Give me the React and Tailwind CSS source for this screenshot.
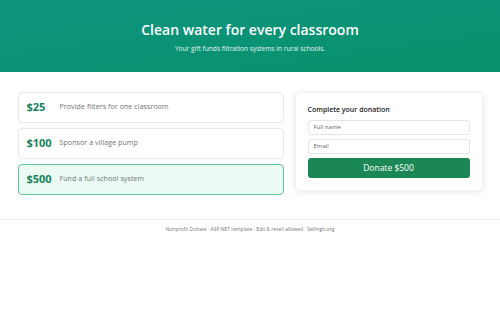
export default function App() {
  const tiers = [
    { amt: "$25", desc: "Provide filters for one classroom" },
    { amt: "$100", desc: "Sponsor a village pump" },
    { amt: "$500", desc: "Fund a full school system", active: true },
  ];
  return (
    <div className="min-h-[333px] bg-white" style={{ fontFamily: '"Open Sans", "Noto Sans", sans-serif' }}>
      <header className="h-[72px] bg-gradient-to-br from-[#0f937f] to-[#06926a] flex flex-col items-center justify-center text-white">
        <h1 className="text-[14px] leading-[19px] font-semibold">Clean water for every classroom</h1>
        <p className="text-[6.6px] leading-[9px] mt-[5px] text-[#e6f5f0]">Your gift funds filtration systems in rural schools.</p>
      </header>
      <main className="w-[465px] mx-auto pt-[20px] flex gap-[11px] items-start">
        <div className="w-[266px] flex flex-col gap-[5px]">
          {tiers.map((t) => (
            <div
              key={t.amt}
              className={
                "h-[31px] rounded-[4px] flex items-center px-[8px] " +
                (t.active ? "border-[1.5px] border-[#62c79c] bg-[#ebfbf3]" : "border border-[#e8e8e8] bg-white")
              }
            >
              <span className="w-[33px] text-[11px] font-bold text-[#17845a]">{t.amt}</span>
              <span className="text-[7px] tracking-[0.1px] text-[#727272]">{t.desc}</span>
            </div>
          ))}
        </div>
        <div className="w-[188px] rounded-[5px] bg-white shadow-[0_1px_6px_rgba(0,0,0,0.1)] border border-[#f1f1f1] px-[12px] pt-[12px] pb-[12px]">
          <h2 className="text-[7px] font-semibold text-[#222] leading-[10px]">Complete your donation</h2>
          <div className="mt-[5px] h-[15px] rounded-[3px] border border-[#e5e5e5] flex items-center px-[5px] text-[6px] text-[#666]">Full name</div>
          <div className="mt-[4px] h-[15px] rounded-[3px] border border-[#e5e5e5] flex items-center px-[5px] text-[6px] text-[#666]">Email</div>
          <div className="mt-[4px] h-[20px] rounded-[3px] bg-[#1a8754] flex items-center justify-center text-white text-[8.5px]">Donate $500</div>
        </div>
      </main>
      <footer className="mt-[24px] border-t border-[#f0f0f0] pt-[6px] text-center text-[5px] text-[#777]">
        Nonprofit Donate · ASP.NET template · Edit &amp; resell allowed · Sellingit.org
      </footer>
    </div>
  );
}
